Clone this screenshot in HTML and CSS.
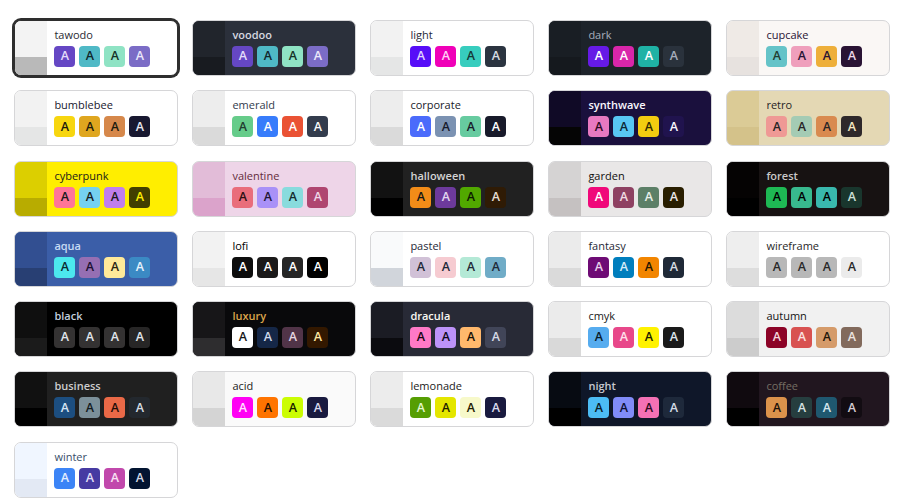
FILE: index.html
```html
<!DOCTYPE html>
<html lang="en">
<head>
<meta charset="utf-8">
<title>Themes</title>
<link rel="stylesheet" href="styles.css">
</head>
<body>
<div class="themes">
  <div class="card t-tawodo selected"><div class="strip"><i></i><b></b></div><div class="body"><div class="name">tawodo</div><div class="sw"><span class="p">A</span><span class="s">A</span><span class="a">A</span><span class="n">A</span></div></div></div>
  <div class="card t-voodoo dk"><div class="strip"><i></i><b></b></div><div class="body"><div class="name">voodoo</div><div class="sw"><span class="p">A</span><span class="s">A</span><span class="a">A</span><span class="n">A</span></div></div></div>
  <div class="card t-light"><div class="strip"><i></i><b></b></div><div class="body"><div class="name">light</div><div class="sw"><span class="p">A</span><span class="s">A</span><span class="a">A</span><span class="n">A</span></div></div></div>
  <div class="card t-dark"><div class="strip"><i></i><b></b></div><div class="body"><div class="name">dark</div><div class="sw"><span class="p">A</span><span class="s">A</span><span class="a">A</span><span class="n">A</span></div></div></div>
  <div class="card t-cupcake"><div class="strip"><i></i><b></b></div><div class="body"><div class="name">cupcake</div><div class="sw"><span class="p">A</span><span class="s">A</span><span class="a">A</span><span class="n">A</span></div></div></div>

  <div class="card t-bumblebee"><div class="strip"><i></i><b></b></div><div class="body"><div class="name">bumblebee</div><div class="sw"><span class="p">A</span><span class="s">A</span><span class="a">A</span><span class="n">A</span></div></div></div>
  <div class="card t-emerald"><div class="strip"><i></i><b></b></div><div class="body"><div class="name">emerald</div><div class="sw"><span class="p">A</span><span class="s">A</span><span class="a">A</span><span class="n">A</span></div></div></div>
  <div class="card t-corporate"><div class="strip"><i></i><b></b></div><div class="body"><div class="name">corporate</div><div class="sw"><span class="p">A</span><span class="s">A</span><span class="a">A</span><span class="n">A</span></div></div></div>
  <div class="card t-synthwave dk"><div class="strip"><i></i><b></b></div><div class="body"><div class="name">synthwave</div><div class="sw"><span class="p">A</span><span class="s">A</span><span class="a">A</span><span class="n">A</span></div></div></div>
  <div class="card t-retro"><div class="strip"><i></i><b></b></div><div class="body"><div class="name">retro</div><div class="sw"><span class="p">A</span><span class="s">A</span><span class="a">A</span><span class="n">A</span></div></div></div>

  <div class="card t-cyberpunk"><div class="strip"><i></i><b></b></div><div class="body"><div class="name">cyberpunk</div><div class="sw"><span class="p">A</span><span class="s">A</span><span class="a">A</span><span class="n">A</span></div></div></div>
  <div class="card t-valentine"><div class="strip"><i></i><b></b></div><div class="body"><div class="name">valentine</div><div class="sw"><span class="p">A</span><span class="s">A</span><span class="a">A</span><span class="n">A</span></div></div></div>
  <div class="card t-halloween dk"><div class="strip"><i></i><b></b></div><div class="body"><div class="name">halloween</div><div class="sw"><span class="p">A</span><span class="s">A</span><span class="a">A</span><span class="n">A</span></div></div></div>
  <div class="card t-garden"><div class="strip"><i></i><b></b></div><div class="body"><div class="name">garden</div><div class="sw"><span class="p">A</span><span class="s">A</span><span class="a">A</span><span class="n">A</span></div></div></div>
  <div class="card t-forest dk"><div class="strip"><i></i><b></b></div><div class="body"><div class="name">forest</div><div class="sw"><span class="p">A</span><span class="s">A</span><span class="a">A</span><span class="n">A</span></div></div></div>

  <div class="card t-aqua dk"><div class="strip"><i></i><b></b></div><div class="body"><div class="name">aqua</div><div class="sw"><span class="p">A</span><span class="s">A</span><span class="a">A</span><span class="n">A</span></div></div></div>
  <div class="card t-lofi"><div class="strip"><i></i><b></b></div><div class="body"><div class="name">lofi</div><div class="sw"><span class="p">A</span><span class="s">A</span><span class="a">A</span><span class="n">A</span></div></div></div>
  <div class="card t-pastel"><div class="strip"><i></i><b></b></div><div class="body"><div class="name">pastel</div><div class="sw"><span class="p">A</span><span class="s">A</span><span class="a">A</span><span class="n">A</span></div></div></div>
  <div class="card t-fantasy"><div class="strip"><i></i><b></b></div><div class="body"><div class="name">fantasy</div><div class="sw"><span class="p">A</span><span class="s">A</span><span class="a">A</span><span class="n">A</span></div></div></div>
  <div class="card t-wireframe"><div class="strip"><i></i><b></b></div><div class="body"><div class="name">wireframe</div><div class="sw"><span class="p">A</span><span class="s">A</span><span class="a">A</span><span class="n">A</span></div></div></div>

  <div class="card t-black dk"><div class="strip"><i></i><b></b></div><div class="body"><div class="name">black</div><div class="sw"><span class="p">A</span><span class="s">A</span><span class="a">A</span><span class="n">A</span></div></div></div>
  <div class="card t-luxury dk"><div class="strip"><i></i><b></b></div><div class="body"><div class="name">luxury</div><div class="sw"><span class="p">A</span><span class="s">A</span><span class="a">A</span><span class="n">A</span></div></div></div>
  <div class="card t-dracula dk"><div class="strip"><i></i><b></b></div><div class="body"><div class="name">dracula</div><div class="sw"><span class="p">A</span><span class="s">A</span><span class="a">A</span><span class="n">A</span></div></div></div>
  <div class="card t-cmyk"><div class="strip"><i></i><b></b></div><div class="body"><div class="name">cmyk</div><div class="sw"><span class="p">A</span><span class="s">A</span><span class="a">A</span><span class="n">A</span></div></div></div>
  <div class="card t-autumn"><div class="strip"><i></i><b></b></div><div class="body"><div class="name">autumn</div><div class="sw"><span class="p">A</span><span class="s">A</span><span class="a">A</span><span class="n">A</span></div></div></div>

  <div class="card t-business dk"><div class="strip"><i></i><b></b></div><div class="body"><div class="name">business</div><div class="sw"><span class="p">A</span><span class="s">A</span><span class="a">A</span><span class="n">A</span></div></div></div>
  <div class="card t-acid"><div class="strip"><i></i><b></b></div><div class="body"><div class="name">acid</div><div class="sw"><span class="p">A</span><span class="s">A</span><span class="a">A</span><span class="n">A</span></div></div></div>
  <div class="card t-lemonade"><div class="strip"><i></i><b></b></div><div class="body"><div class="name">lemonade</div><div class="sw"><span class="p">A</span><span class="s">A</span><span class="a">A</span><span class="n">A</span></div></div></div>
  <div class="card t-night dk"><div class="strip"><i></i><b></b></div><div class="body"><div class="name">night</div><div class="sw"><span class="p">A</span><span class="s">A</span><span class="a">A</span><span class="n">A</span></div></div></div>
  <div class="card t-coffee"><div class="strip"><i></i><b></b></div><div class="body"><div class="name">coffee</div><div class="sw"><span class="p">A</span><span class="s">A</span><span class="a">A</span><span class="n">A</span></div></div></div>

  <div class="card t-winter"><div class="strip"><i></i><b></b></div><div class="body"><div class="name">winter</div><div class="sw"><span class="p">A</span><span class="s">A</span><span class="a">A</span><span class="n">A</span></div></div></div>
</div>
</body>
</html>
```
FILE: styles.css
```css
html, body {
  margin: 0;
  padding: 0;
  background: #ffffff;
}

body {
  font-family: "Open Sans", "Noto Sans", sans-serif;
}

.themes {
  display: grid;
  grid-template-columns: repeat(5, 164px);
  column-gap: 14px;
  row-gap: 14.3px;
  padding: 20px 14px;
}

.card {
  box-sizing: border-box;
  height: 56px;
  border: 1px solid #d6d6d8;
  border-radius: 7px;
  overflow: hidden;
  display: grid;
  grid-template-columns: 20% 1fr;
  background: var(--b1);
  color: var(--bc);
}

.card.selected {
  border-color: #2e2e2e;
  box-shadow: 0 0 0 2px #2e2e2e;
}

.strip {
  display: grid;
  grid-template-rows: 2fr 1fr;
}

.strip i {
  background: var(--b2);
}

.strip b {
  background: var(--b3);
}

.body {
  padding: 6px 7px;
  display: flex;
  flex-direction: column;
  gap: 4px;
}

.name {
  font-size: 11px;
  line-height: 15px;
  font-weight: 500;
}

.dk .name {
  font-weight: 600;
}

.sw {
  display: flex;
  gap: 4px;
}

.sw span {
  width: 21px;
  height: 21px;
  border-radius: 4px;
  display: flex;
  align-items: center;
  justify-content: center;
  font-size: 12.5px;
  font-weight: 600;
  line-height: 1;
}

.sw .p { background: var(--p); color: var(--pc); }
.sw .s { background: var(--s); color: var(--sc); }
.sw .a { background: var(--a); color: var(--ac); }
.sw .n { background: var(--n); color: var(--nc); }

.t-tawodo { --b1:#ffffff; --b2:#f3f3f3; --b3:#b9b9b9; --bc:#2b2b33; --p:#6547c4; --pc:#e4dcfb; --s:#4fb9c6; --sc:#11262a; --a:#8fe3c4; --ac:#143226; --n:#7b6cc6; --nc:#ece8fb; }
.t-voodoo { --b1:#2b303b; --b2:#21252c; --b3:#181b20; --bc:#d6d9e0; --p:#6547c4; --pc:#e4dcfb; --s:#4fb9c6; --sc:#11262a; --a:#8fe3c4; --ac:#143226; --n:#7b6cc6; --nc:#ece8fb; }
.t-light { --b1:#ffffff; --b2:#f2f2f2; --b3:#e5e6e6; --bc:#1f2937; --p:#570df8; --pc:#e0d2fe; --s:#f000b8; --sc:#ffd1f4; --a:#37cdbe; --ac:#163835; --n:#2b3440; --nc:#d7dde4; }
.t-dark { --b1:#1d232a; --b2:#191e24; --b3:#15191e; --bc:#a6adbb; --p:#661ae6; --pc:#ffffff; --s:#d926aa; --sc:#ffffff; --a:#1fb2a5; --ac:#ffffff; --n:#2a323c; --nc:#a6adbb; }
.t-cupcake { --b1:#faf7f5; --b2:#efeae6; --b3:#e7e2df; --bc:#291334; --p:#65c3c8; --pc:#223d30; --s:#ef9fbc; --sc:#291334; --a:#eeaf3a; --ac:#291334; --n:#291334; --nc:#edd7e9; }

.t-bumblebee { --b1:#ffffff; --b2:#f2f2f2; --b3:#e5e6e6; --bc:#181830; --p:#f7d60f; --pc:#1b1a0d; --s:#dfa61f; --sc:#1b1a0d; --a:#d6884b; --ac:#1b1a0d; --n:#181830; --nc:#e8e8f0; }
.t-emerald { --b1:#ffffff; --b2:#ededed; --b3:#dadada; --bc:#333c4d; --p:#66cc8a; --pc:#223d30; --s:#377cfb; --sc:#ffffff; --a:#ea5234; --ac:#ffffff; --n:#333c4d; --nc:#f9fafb; }
.t-corporate { --b1:#ffffff; --b2:#ededed; --b3:#dadada; --bc:#181a2a; --p:#4b6bfb; --pc:#ffffff; --s:#7b92b2; --sc:#181a2a; --a:#67cba0; --ac:#181a2a; --n:#181a2a; --nc:#ffffff; }
.t-synthwave { --b1:#1a103d; --b2:#100a26; --b3:#050505; --bc:#f9f7fd; --p:#e779c1; --pc:#2d0a1e; --s:#58c7f3; --sc:#0d2733; --a:#f3cc10; --ac:#302800; --n:#20134e; --nc:#f9f7fd; }
.t-retro { --b1:#e4d8b4; --b2:#dbcb96; --b3:#d4c28a; --bc:#282425; --p:#ef9995; --pc:#282425; --s:#a4cbb4; --sc:#282425; --a:#d98a4f; --ac:#282425; --n:#2e282a; --nc:#f6e8c4; }

.t-cyberpunk { --b1:#ffee00; --b2:#dccf00; --b3:#b8ac00; --bc:#1a1a1a; --p:#ff7598; --pc:#1a1a1a; --s:#75d1f0; --sc:#1a1a1a; --a:#c07eec; --ac:#1a1a1a; --n:#423f00; --nc:#ffee00; }
.t-valentine { --b1:#eed5e8; --b2:#e2bcd8; --b3:#dba3cb; --bc:#632c3b; --p:#e96d7b; --pc:#2c0f12; --s:#a991f7; --sc:#1f1533; --a:#88dbdd; --ac:#142b2c; --n:#af4670; --nc:#f0d6e8; }
.t-halloween { --b1:#212121; --b2:#121212; --b3:#000000; --bc:#d4d4d4; --p:#f28c18; --pc:#131616; --s:#6d3a9c; --sc:#e2d6f0; --a:#51a800; --ac:#0c1a00; --n:#2f1b05; --nc:#e6ddd2; }
.t-garden { --b1:#e9e7e7; --b2:#d5d3d3; --b3:#c5c1c1; --bc:#100f0f; --p:#f0087a; --pc:#ffffff; --s:#8e4162; --sc:#f0dce4; --a:#5c7f67; --ac:#e8f0ea; --n:#291e00; --nc:#e9e7e7; }
.t-forest { --b1:#171212; --b2:#050303; --b3:#000000; --bc:#cac9c9; --p:#1eb854; --pc:#000000; --s:#38b98e; --sc:#000000; --a:#39b8ad; --ac:#000000; --n:#19362d; --nc:#cde0d8; }

.t-aqua { --b1:#3b5ea8; --b2:#324f91; --b3:#283f73; --bc:#c6dbf5; --p:#4ce8ee; --pc:#0b2a30; --s:#966fb3; --sc:#1b1030; --a:#ffe999; --ac:#2a2411; --n:#3b8ac4; --nc:#e6f2fb; }
.t-lofi { --b1:#ffffff; --b2:#f2f2f2; --b3:#e6e6e6; --bc:#000000; --p:#0d0d0d; --pc:#ffffff; --s:#1a1919; --sc:#ffffff; --a:#262626; --ac:#ffffff; --n:#000000; --nc:#ffffff; }
.t-pastel { --b1:#ffffff; --b2:#f9fafb; --b3:#d1d5db; --bc:#1f2937; --p:#d1c1d7; --pc:#1f2937; --s:#f6cbd1; --sc:#1f2937; --a:#b4e9d6; --ac:#1f2937; --n:#70acc7; --nc:#1f2937; }
.t-fantasy { --b1:#ffffff; --b2:#ebebeb; --b3:#dadada; --bc:#1f2937; --p:#6e0b75; --pc:#e8cfeb; --s:#007ebd; --sc:#d6ecf8; --a:#f28500; --ac:#231300; --n:#1f2937; --nc:#d7dde4; }
.t-wireframe { --b1:#ffffff; --b2:#eeeeee; --b3:#dddddd; --bc:#282828; --p:#b8b8b8; --pc:#282828; --s:#b8b8b8; --sc:#282828; --a:#b8b8b8; --ac:#282828; --n:#ebebeb; --nc:#282828; }

.t-black { --b1:#000000; --b2:#0f0f0f; --b3:#1b1b1b; --bc:#c2cfdd; --p:#343232; --pc:#e1e6ec; --s:#343232; --sc:#e1e6ec; --a:#343232; --ac:#e1e6ec; --n:#272626; --nc:#e1e6ec; }
.t-luxury { --b1:#09090b; --b2:#171618; --b3:#2e2d2f; --bc:#dca54c; --p:#ffffff; --pc:#161616; --s:#152747; --sc:#cfd9ec; --a:#513448; --ac:#e6d6e1; --n:#331800; --nc:#ffe7a3; }
.t-dracula { --b1:#282a36; --b2:#1b1c24; --b3:#0b0b0f; --bc:#f8f8f2; --p:#ff79c6; --pc:#16050f; --s:#bd93f9; --sc:#0d0816; --a:#ffb86c; --ac:#161006; --n:#414558; --nc:#d6d9e6; }
.t-cmyk { --b1:#ffffff; --b2:#ebebeb; --b3:#d9d9d9; --bc:#1a1a1a; --p:#56acef; --pc:#0a1a28; --s:#e8488a; --sc:#ffe0ec; --a:#fff200; --ac:#1a1a00; --n:#1a1a1a; --nc:#dde6ee; }
.t-autumn { --b1:#f1f1f1; --b2:#dcdcdc; --b3:#cccccc; --bc:#141414; --p:#8c0327; --pc:#f5d5dc; --s:#d85251; --sc:#fbe2e1; --a:#d59b6a; --ac:#231608; --n:#826a5c; --nc:#ede5e0; }

.t-business { --b1:#202020; --b2:#111111; --b3:#000000; --bc:#cdcdcd; --p:#1c4e80; --pc:#d6e4f3; --s:#7c909a; --sc:#131a1d; --a:#ea6947; --ac:#1f0d08; --n:#23282e; --nc:#d6dde4; }
.t-acid { --b1:#fafafa; --b2:#e8e8e8; --b3:#d4d4d4; --bc:#1a1a1a; --p:#ff00f4; --pc:#ffe0fd; --s:#ff7400; --sc:#241000; --a:#cbfd03; --ac:#1a2000; --n:#191a3f; --nc:#d8d9ee; }
.t-lemonade { --b1:#ffffff; --b2:#ececec; --b3:#dadada; --bc:#1a1a1a; --p:#569e03; --pc:#e4f7d0; --s:#e4e600; --sc:#1f1f00; --a:#f7f9ca; --ac:#1f2000; --n:#191a3f; --nc:#d8d9ee; }
.t-night { --b1:#0f1729; --b2:#070b12; --b3:#000000; --bc:#c8cad0; --p:#4cbcf5; --pc:#0a1a24; --s:#818cf8; --sc:#0e1030; --a:#f471b5; --ac:#2c0a1c; --n:#1e293b; --nc:#d4dbe6; }
.t-coffee { --b1:#21161f; --b2:#100a0f; --b3:#000000; --bc:#756e63; --p:#db924b; --pc:#1b1008; --s:#263e3f; --sc:#d6e2e2; --a:#1f5870; --ac:#d6e6ee; --n:#120c12; --nc:#d4cbd3; }

.t-winter { --b1:#ffffff; --b2:#f0f6ff; --b3:#e3e9f4; --bc:#394e6a; --p:#3c84f6; --pc:#e4eefe; --s:#463aa2; --sc:#e2def7; --a:#c148ac; --ac:#f8e2f3; --n:#021431; --nc:#d2d9e6; }
```
